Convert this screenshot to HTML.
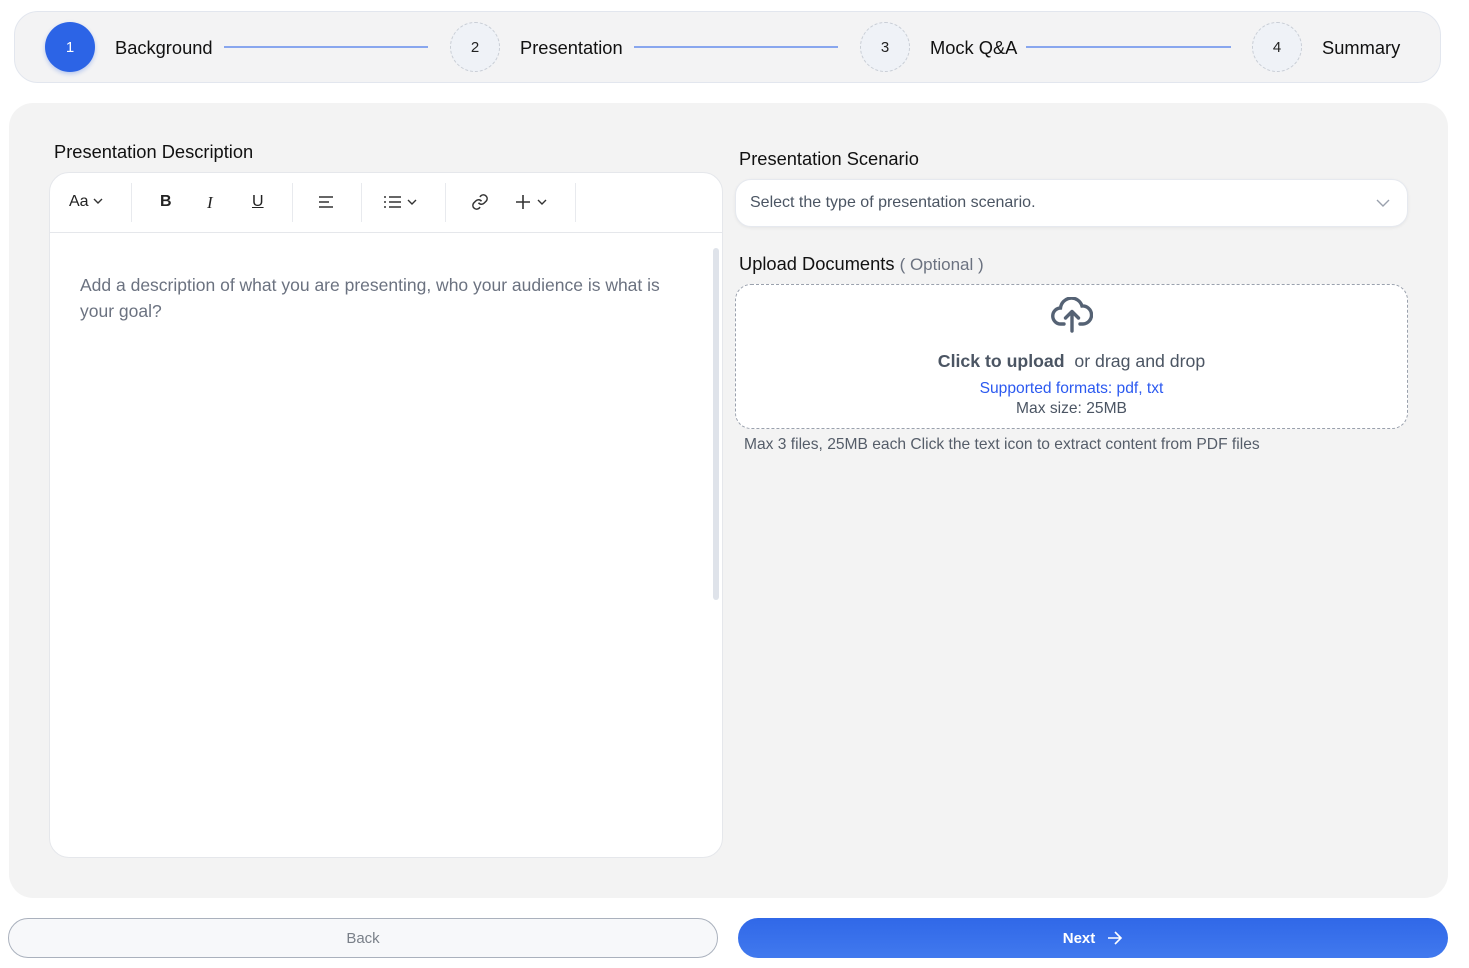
<!DOCTYPE html>
<html><head><meta charset="utf-8"><style>
*{box-sizing:border-box;margin:0;padding:0}
body{width:1469px;height:968px;background:#fff;font-family:"Liberation Sans",sans-serif;position:relative;overflow:hidden;color:#111}
.abs{position:absolute}
.stepper{left:14px;top:11px;width:1427px;height:72px;background:#f3f3f4;border:1px solid #e2e6ee;border-radius:24px}
.circ{width:50px;height:50px;border-radius:50%;border:1px dashed #c9ced6;background:#eff2f7;display:flex;align-items:center;justify-content:center;font-size:15px;color:#222;top:22px}
.circ.act{background:#2c64e6;border:none;color:#fff;box-shadow:0 2px 4px rgba(44,100,230,.3)}
.slab{top:37px;font-size:18.3px;color:#111}
.line{top:46px;height:2px;background:#88a6ee}
.panel{left:9px;top:103px;width:1439px;height:795px;background:#f3f3f3;border-radius:24px}
.lbl{font-size:18.3px;color:#111}
.editor{left:49px;top:172px;width:674px;height:686px;background:#fff;border:1px solid #e5e7eb;border-radius:20px;overflow:hidden}
.tb{position:absolute;left:0;top:0;width:100%;height:60px;border-bottom:1px solid #e5e7eb}
.sep{position:absolute;top:10px;width:1px;height:39px;background:#e8eaee}
.ti{position:absolute;top:20px;font-size:16px;color:#222}
.sel{left:735px;top:179px;width:673px;height:48px;background:#fff;border:1px solid #e6e9ef;border-radius:16px;box-shadow:0 1px 3px rgba(0,0,0,.06)}
.drop{left:735px;top:284px;width:673px;height:145px;background:#fff;border:1px dashed #9aa1ad;border-radius:16px;text-align:center}
.btn{top:918px;height:40px;border-radius:20px;display:flex;align-items:center;justify-content:center;font-size:15px}
</style></head><body>
<div class="abs stepper"></div>
<div class="abs circ act" style="left:45px">1</div>
<div class="abs slab" style="left:115px">Background</div>
<div class="abs line" style="left:224px;width:204px"></div>
<div class="abs circ" style="left:450px">2</div>
<div class="abs slab" style="left:520px">Presentation</div>
<div class="abs line" style="left:634px;width:204px"></div>
<div class="abs circ" style="left:860px">3</div>
<div class="abs slab" style="left:930px">Mock Q&amp;A</div>
<div class="abs line" style="left:1026px;width:205px"></div>
<div class="abs circ" style="left:1252px">4</div>
<div class="abs slab" style="left:1322px">Summary</div>

<div class="abs panel"></div>
<div class="abs lbl" style="left:54px;top:141px">Presentation Description</div>
<div class="abs editor">
 <div class="tb">
  <div class="ti" style="left:19px">Aa<svg width="12" height="10" viewBox="0 0 12 10" style="margin-left:3px"><path d="M2 3l4 4 4-4" fill="none" stroke="#333" stroke-width="1.4"/></svg></div>
  <div class="sep" style="left:81px"></div>
  <div class="ti" style="left:110px;font-weight:bold">B</div>
  <div class="ti" style="left:157px;font-style:italic;font-family:'Liberation Serif',serif;font-size:17px">I</div>
  <div class="ti" style="left:202px;text-decoration:underline">U</div>
  <div class="sep" style="left:242px"></div>
  <svg class="abs" style="left:268px;top:22px" width="16" height="14" viewBox="0 0 16 14"><path d="M1 2h14M1 7h10M1 12h14" stroke="#333" stroke-width="1.6"/></svg>
  <div class="sep" style="left:311px"></div>
  <svg class="abs" style="left:333px;top:22px" width="36" height="14" viewBox="0 0 36 14"><path d="M1 2h2M1 7h2M1 12h2M6 2h12M6 7h12M6 12h12" stroke="#333" stroke-width="1.6"/><path d="M25 5l4 4 4-4" fill="none" stroke="#333" stroke-width="1.4"/></svg>
  <div class="sep" style="left:395px"></div>
  <svg class="abs" style="left:421px;top:20px" width="18" height="18" viewBox="0 0 24 24"><path d="M10 13a5 5 0 0 0 7.5.5l3-3a5 5 0 0 0-7-7l-1.7 1.7M14 11a5 5 0 0 0-7.5-.5l-3 3a5 5 0 0 0 7 7l1.7-1.7" fill="none" stroke="#333" stroke-width="2"/></svg>
  <svg class="abs" style="left:465px;top:21px" width="36" height="16" viewBox="0 0 36 16"><path d="M8 1v14M1 8h14" stroke="#333" stroke-width="1.6"/><path d="M23 6l4 4 4-4" fill="none" stroke="#333" stroke-width="1.4"/></svg>
  <div class="sep" style="left:525px"></div>
 </div>
 <div class="abs" style="left:30px;top:100px;width:600px;font-size:17.5px;line-height:25.5px;color:#6b7280">Add a description of what you are presenting, who your audience is what is your goal?</div>
 <div class="abs" style="left:663px;top:75px;width:6px;height:352px;background:#dfe3ea;border-radius:3px"></div>
</div>

<div class="abs lbl" style="left:739px;top:148px">Presentation Scenario</div>
<div class="abs sel">
 <div class="abs" style="left:14px;top:14px;font-size:16px;color:#4b5563">Select the type of presentation scenario.</div>
 <svg class="abs" style="left:639px;top:17px" width="16" height="12" viewBox="0 0 16 12"><path d="M2 3l6 6 6-6" fill="none" stroke="#9aa1ad" stroke-width="1.4"/></svg>
</div>
<div class="abs lbl" style="left:739px;top:253px">Upload Documents <span style="color:#6b7280;font-size:17px">( Optional )</span></div>
<div class="abs drop">
 <svg class="abs" style="left:315px;top:12px" width="42" height="36" viewBox="0 0 42 36"><path d="M13 27H10A8 8 0 0 1 9.5 11 11 11 0 0 1 31 9a8.5 8.5 0 0 1 1 18h-3" fill="none" stroke="#556274" stroke-width="3.4" stroke-linecap="round"/><path d="M21 34V15M14.5 21l6.5-6.5 6.5 6.5" fill="none" stroke="#556274" stroke-width="3.4" stroke-linecap="round" stroke-linejoin="round"/></svg>
 <div class="abs" style="left:0;width:100%;top:66px;font-size:17.7px;color:#4b5563"><b style="color:#4b5563">Click to upload</b>&nbsp; or drag and drop</div>
 <div class="abs" style="left:0;width:100%;top:95px;font-size:15.6px;color:#2b59f0">Supported formats: pdf, txt</div>
 <div class="abs" style="left:0;width:100%;top:115px;font-size:15.6px;color:#4b5563">Max size: 25MB</div>
</div>
<div class="abs" style="left:744px;top:436px;font-size:15.6px;color:#555d69">Max 3 files, 25MB each Click the text icon to extract content from PDF files</div>

<div class="abs btn" style="left:8px;width:710px;background:#f7f8fa;border:1px solid #aab1bd;color:#7a8089">Back</div>
<div class="abs btn" style="left:738px;width:710px;background:linear-gradient(#3068e8,#4179ee);color:#fff;font-weight:bold">Next<svg width="16" height="14" viewBox="0 0 16 14" style="margin-left:12px"><path d="M1 7h13M8 1l6 6-6 6" fill="none" stroke="#fff" stroke-width="1.6"/></svg></div>
</body></html>
